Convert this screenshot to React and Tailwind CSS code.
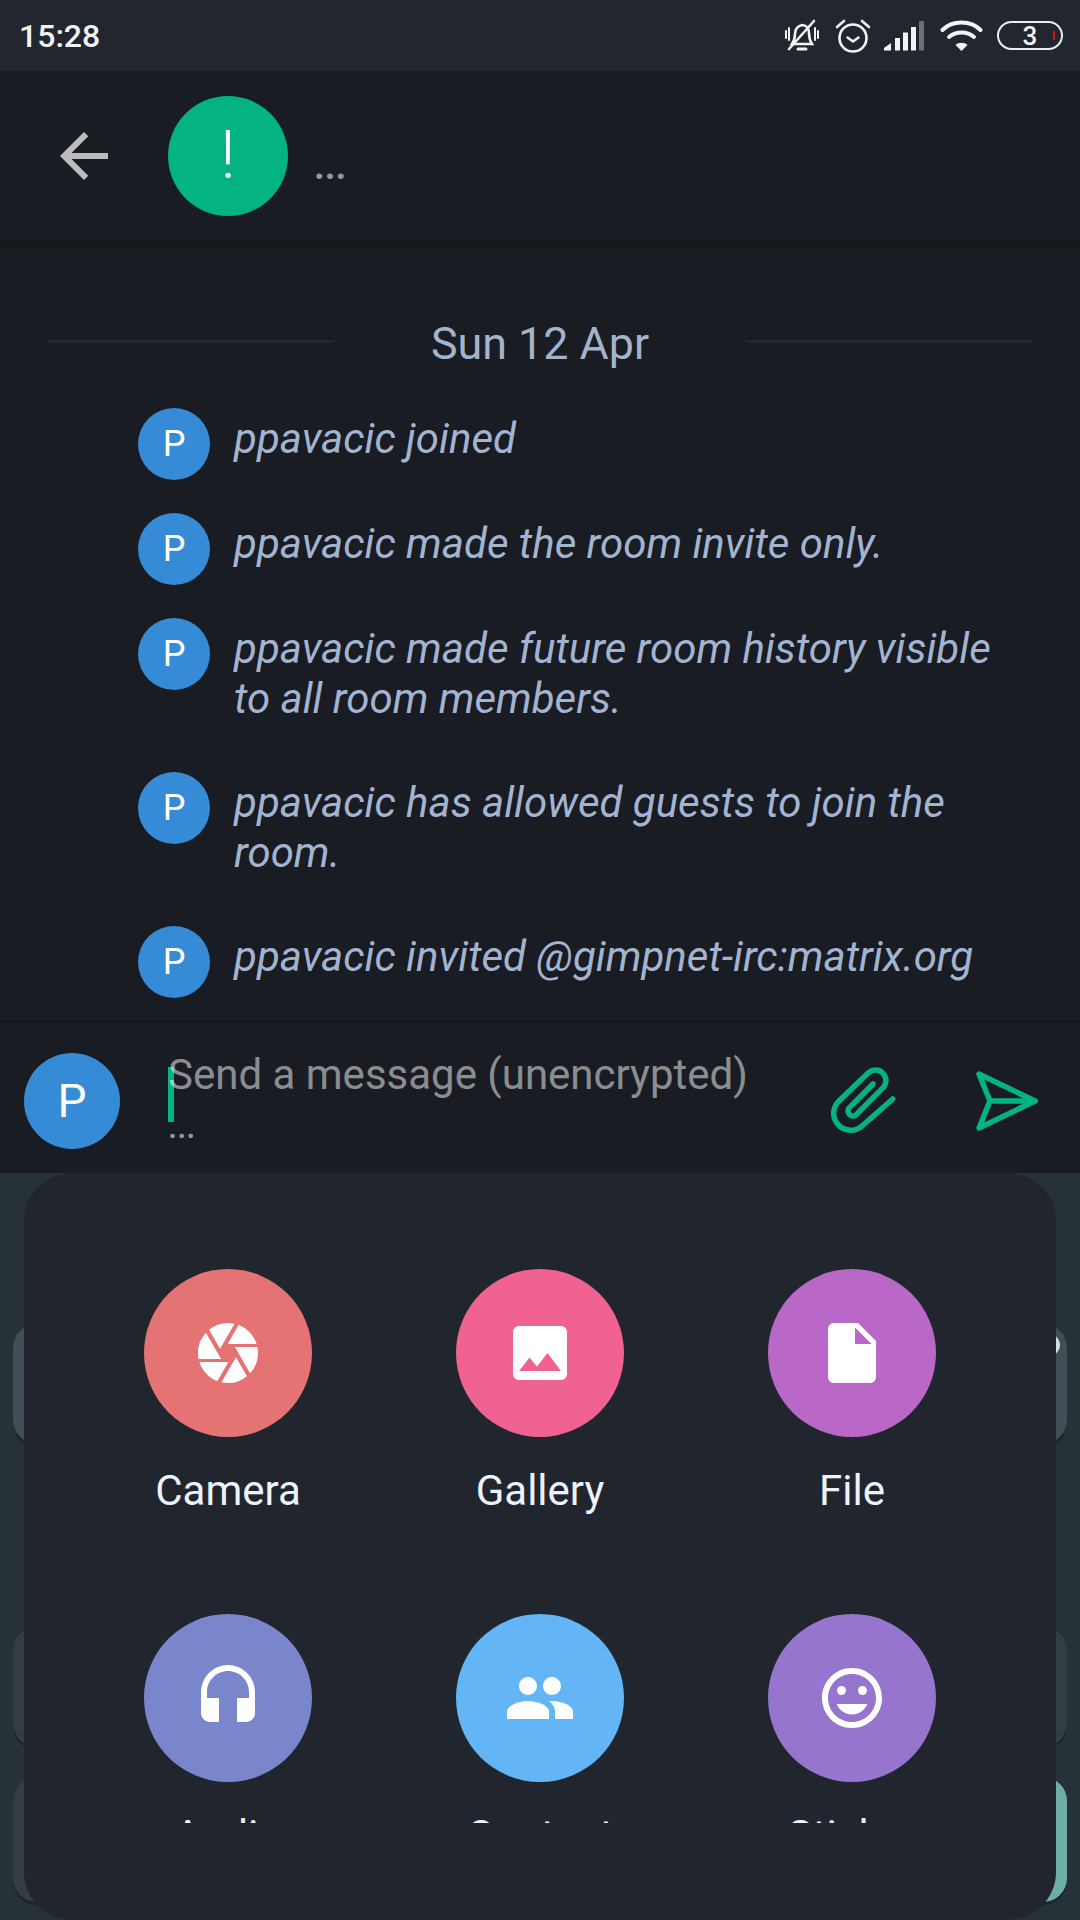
import { MdArrowBack, MdCamera, MdImage, MdInsertDriveFile, MdHeadset, MdPeople, MdInsertEmoticon } from 'react-icons/md';

const MESSAGES = [
  ['ppavacic joined'],
  ['ppavacic made the room invite only.'],
  ['ppavacic made future room history visible', 'to all room members.'],
  ['ppavacic has allowed guests to join the', 'room.'],
  ['ppavacic invited @gimpnet-irc:matrix.org'],
];

const ATTACHMENTS = [
  { label: 'Camera', Icon: MdCamera, color: 'bg-[#e57373]' },
  { label: 'Gallery', Icon: MdImage, color: 'bg-[#f06292]' },
  { label: 'File', Icon: MdInsertDriveFile, color: 'bg-[#ba68c8]' },
  { label: 'Audio', Icon: MdHeadset, color: 'bg-[#7986cb]' },
  { label: 'Contact', Icon: MdPeople, color: 'bg-[#64b5f6]' },
  { label: 'Sticker', Icon: MdInsertEmoticon, color: 'bg-[#9575cd]' },
];

const StatusIcons = () => (
  <div className="flex items-center">
    <svg width="36" height="34" viewBox="0 0 36 34" fill="none" stroke="#f2f3f4" strokeWidth="2.6" strokeLinecap="round">
      <path d="M8 25c2-3 3-5 3-10 0-5 3-8 7-9 4 0 7 3 7 8 0 5 1 8 3 11H8z" />
      <path d="M14 30h8" strokeWidth="3" />
      <path d="M2 12v7M5 9v12M31 9v12M34 12v7" strokeWidth="2" />
      <path d="M5 30L30 2" />
    </svg>
    <svg className="ml-[15px]" width="36" height="34" viewBox="0 0 36 34" fill="none" stroke="#f2f3f4" strokeWidth="2.6" strokeLinecap="round" strokeLinejoin="round">
      <circle cx="18" cy="19" r="13.5" />
      <path d="M12.5 18.5l5.5 4 5.500-4" />
      <path d="M2 8l7-6M34 8l-7-6" />
    </svg>
    <svg className="ml-[13px]" width="41" height="30" viewBox="0 0 41 30">
      <path d="M0 29.500h7v-7.500L0 27z" fill="#f2f3f4" />
      <rect x="11" y="17" width="5" height="12.500" fill="#f2f3f4" />
      <rect x="19" y="11.500" width="5" height="18" fill="#f2f3f4" />
      <rect x="27" y="6" width="5" height="23.500" fill="#f2f3f4" />
      <rect x="35" y="0" width="5" height="29.500" fill="#6c6f73" />
    </svg>
    <svg className="ml-[15px]" width="43" height="31" viewBox="0 0 43 31" fill="none" stroke="#f2f3f4" strokeWidth="4" strokeLinecap="round">
      <path d="M2.500 10C12 0 31 0 40.500 10" />
      <path d="M9 17c7-6 18-6 25 0" />
      <path d="M21.500 31l-6-6c3-3 9-3 12 0z" fill="#f2f3f4" stroke="none" />
    </svg>
    <div className="relative ml-[14px] flex h-[29px] w-[66px] items-center justify-center rounded-[15px] border-[2.500px] border-[#eceded] text-[26px] font-medium leading-none text-[#f2f3f4]">
      3
      <span className="absolute right-[6px] top-[8px] h-[9px] w-[2px] bg-[#d0111b]"></span>
    </div>
  </div>
);

const Avatar = () => (
  <div className="flex h-[72px] w-[72px] shrink-0 items-center justify-center rounded-full bg-[#368bd6] text-[36px] leading-none text-white">
    P
  </div>
);

const Key = ({ color }) => (
  <div className={`h-full w-[60px] rounded-[24px] shadow-[0_3px_0_#1d2429] ${color}`}></div>
);

const App = () => (
  <div className="flex h-[1920px] w-[1080px] flex-col overflow-hidden bg-[#191c23] font-[Roboto,sans-serif]">
    {/* status bar */}
    <div className="flex h-[71px] shrink-0 items-center justify-between bg-[#22262e] pl-[19px] pr-[17px]">
      <span className="text-[32px] font-medium leading-none text-[#f2f3f4]">15:28</span>
      <StatusIcons />
    </div>

    {/* room header */}
    <div className="flex h-[169px] shrink-0 items-center pl-[48px]">
      <MdArrowBack size={72} color="#b9bbbd" />
      <div className="ml-[48px] flex h-[120px] w-[120px] items-center justify-center rounded-full bg-[#03b381] text-[66px] font-light leading-none text-white">
        !
      </div>
      <span className="ml-[26px] mt-[21px] text-[37px] font-bold leading-none text-[#8d99a5]">...</span>
    </div>

    {/* timeline */}
    <div className="h-[780px] shrink-0 overflow-hidden">
      <div className="h-[16px] bg-linear-to-b from-[#15181c] to-[#191c23]"></div>
      <div className="px-[48px] pt-[57px]">
        <div className="flex h-[56px] items-center">
          <div className="h-[3px] flex-1 bg-[#22262e]"></div>
          <span className="w-[410px] pt-[6px] text-center text-[44.800px] leading-none text-[#a3b4ca]">Sun 12 Apr</span>
          <div className="h-[3px] flex-1 bg-[#22262e]"></div>
        </div>
        <div className="mt-[39px] flex flex-col gap-[33px] pl-[90px]">
          {MESSAGES.map((lines) => (
            <div key={lines[0]} className="flex gap-[24px]">
              <Avatar />
              <div className="pb-[16px] pt-[6px] text-[42px] italic leading-[49.5px] text-[#a3b4d1]">
                {lines.map((line) => (
                  <div key={line} className="whitespace-nowrap">{line}</div>
                ))}
              </div>
            </div>
          ))}
        </div>
      </div>
    </div>

    {/* composer */}
    <div className="flex h-[153px] shrink-0 items-center border-t-[3px] border-[#14171c] pl-[24px] pt-[5px]">
      <div className="flex h-[96px] w-[96px] shrink-0 items-center justify-center rounded-full bg-[#368bd6] text-[46px] leading-none text-white">
        P
      </div>
      <div className="relative ml-[48px] h-full w-[620px]">
        <span className="absolute left-0 top-[39px] h-[55px] w-[6px] bg-[#03b381]"></span>
        <span className="absolute left-0 top-[17px] whitespace-nowrap text-[42px] leading-[60px] text-[#ffffff80]">
          Send a message (unencrypted)
        </span>
        <span className="absolute left-0 top-[82px] text-[33px] font-medium leading-none text-[#8d99a5]">...</span>
      </div>
      <svg className="ml-[32px]" width="76" height="90" viewBox="0 6 76 90" fill="none" stroke="#03b381" strokeWidth="5.500" strokeLinecap="round">
        <path d="M72.700 49L42 76A17 17 0 0 1 18 52L48.600 22.600A10.500 10.500 0 0 1 63.400 37.400L36 65A5 5 0 0 1 29 58L53 34" />
      </svg>
      <svg className="ml-[76px]" width="68" height="66" viewBox="0 0 68 66" fill="none" stroke="#03b381" strokeWidth="5.500" strokeLinecap="round" strokeLinejoin="round">
        <path d="M7 6L63 33 7 60 18 33z" />
        <path d="M18 33H63" />
      </svg>
    </div>

    {/* keyboard behind the attachment sheet */}
    <div className="relative flex-1 bg-[#263238] px-[13px]">
      <div className="flex flex-col">
        <div className="mt-[151px] flex h-[120px] justify-between">
          <Key color="bg-[#424e56]" />
          <div className="relative">
            <Key color="bg-[#424e56]" />
            <span className="absolute right-[7px] top-[10px] h-[22px] w-[22px] rounded-full bg-[#d7dadc]"></span>
          </div>
        </div>
        <div className="mt-[183px] flex h-[120px] justify-between">
          <Key color="bg-[#323d44]" />
          <Key color="bg-[#323d44]" />
        </div>
        <div className="mt-[30px] flex h-[125px] justify-between">
          <Key color="bg-[#323d44]" />
          <Key color="bg-[#6fada8]" />
        </div>
      </div>

      <div className="absolute inset-x-[24px] top-0 bottom-0 rounded-[48px] bg-[#21262e]">
        <div className="h-[650px] overflow-hidden">
          <div className="grid grid-cols-3 gap-y-[99px] px-[48px] pt-[96px]">
            {ATTACHMENTS.map(({ label, Icon, color }) => (
              <div key={label} className="flex flex-col items-center">
                <div className={`flex h-[168px] w-[168px] items-center justify-center rounded-full text-white ${color}`}>
                  <Icon size={72} />
                </div>
                <span className="mt-[30px] text-[42px] leading-[48px] text-[#edf2fc]">{label}</span>
              </div>
            ))}
          </div>
        </div>
      </div>
    </div>
  </div>
);

export default App;
